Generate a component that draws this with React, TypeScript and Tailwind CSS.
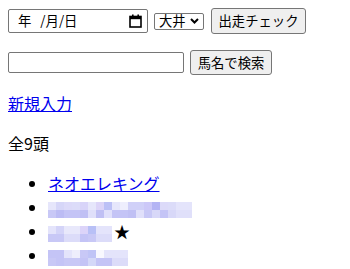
import React from 'react';

// モザイク部分（ぼかされた馬名）の色
const blur2 = [
  ['#e6e6fb', '#d6d6f8', '#dcdaf9', '#dcdcf9', '#d8d4f9', '#e6e6fb', '#dcd4f8', '#bcc0f6', '#e6e6fb', '#eeeefd', '#d0d0f8', '#d0d0f8', '#ccc8f8', '#b4b4f4', '#dcdaf9', '#dcdcf9', '#e4e4fb', '#e4e4fb'],
  ['#c8c8f6', '#bcbcf4', '#c4c4f6', '#c4c4f6', '#c0c0f4', '#e0e0fa', '#c0c0f4', '#e0e0fb', '#c4c4f6', '#c4c4f6', '#c0c0f4', '#e0e0fa', '#c8c8f6', '#d8d8f8', '#c4c4f6', '#d8d8f8', '#e0e0fa', '#e0e0fa'],
];
const blur3 = [
  ['#e4e4fb', '#d4d4f8', '#e8e8fb', '#e8e8fb', '#dcd4f9', '#b8c0f6', '#e4e4fb', '#e4e4fb'],
  ['#c8c8f6', '#c8c8f6', '#dcdcf9', '#dcdcf9', '#c4c4f6', '#c8c8f6', '#dcdcf9', '#dcdcf9'],
];
const blur4 = [
  ['#c4c4f6', '#c4c4f6', '#e4e4fb', '#eeeefc', '#c8c8f6', '#c0c4f6', '#f8f8fe', '#e4e4fb', '#e4e4fb', '#e4e4fb'],
  ['#c8c8f6', '#c4c4f6', '#c8c8f6', '#c8c8f6', '#c4c4f6', '#d4d8f8', '#c4c4f6', '#c4c4f6', '#dcdcf9', '#dcdcf9'],
];

function Mosaic({ rows }: { rows: string[][] }) {
  return (
    <span className="inline-flex flex-col align-middle">
      {rows.map((row, i) => (
        <span key={i} className="flex">
          {row.map((c, j) => (
            <span key={j} className="block w-2 h-2" style={{ backgroundColor: c }} />
          ))}
        </span>
      ))}
    </span>
  );
}

export default function App() {
  return (
    <div className="p-2 text-black text-[16px] leading-[24px] font-['Noto_Sans_CJK_JP','Noto_Sans',sans-serif]">
      {/* 出走チェック */}
      <div className="flex items-center h-[26px]">
        <div className="w-[140px] h-6 border border-[#767676] rounded-[2px] flex items-center pl-[9px] pr-[5px] text-[13.33px] leading-none">
          <span>年</span>
          <span className="ml-[9px]">/月/日</span>
          <svg className="ml-auto" width="13" height="14" viewBox="0 0 13 14">
            <rect x="1" y="2.5" width="11" height="10.5" fill="none" stroke="#000" strokeWidth="1.6" />
            <rect x="1" y="2" width="11" height="3.2" fill="#000" />
            <rect x="3" y="0.5" width="1.6" height="2.5" fill="#000" />
            <rect x="8.4" y="0.5" width="1.6" height="2.5" fill="#000" />
          </svg>
        </div>
        <div className="ml-[6px] w-[50px] h-[17px] border border-[#767676] rounded-[2px] flex items-center pl-[4px] text-[13.33px] leading-none">
          <span>大井</span>
          <svg className="ml-[4px]" width="9" height="6" viewBox="0 0 9 6">
            <path d="M1 1 L4.5 4.5 L8 1" fill="none" stroke="#000" strokeWidth="2" />
          </svg>
        </div>
        <button className="ml-[7px] w-[95px] h-[26px] bg-[#efefef] border border-[#767676] rounded-[3px] text-[13.33px] leading-none">
          出走チェック
        </button>
      </div>

      {/* 馬名検索 */}
      <div className="flex items-center h-[25px] mt-4">
        <div className="w-[176px] h-[21px] border border-[#767676] rounded-[2px]" />
        <button className="ml-[6px] w-[82px] h-[25px] bg-[#efefef] border border-[#767676] rounded-[3px] text-[13.33px] leading-none">
          馬名で検索
        </button>
      </div>

      <div className="mt-4">
        <a href="#" className="text-[#0000ee] underline">新規入力</a>
      </div>

      <p className="mt-4">全9頭</p>

      <ul className="mt-4 list-disc pl-10">
        <li>
          <a href="#" className="text-[#0000ee] underline">ネオエレキング</a>
        </li>
        <li>
          <Mosaic rows={blur2} />
        </li>
        <li>
          <Mosaic rows={blur3} />
          <span className="ml-[2px]">★</span>
        </li>
        <li>
          <Mosaic rows={blur4} />
        </li>
      </ul>
    </div>
  );
}
